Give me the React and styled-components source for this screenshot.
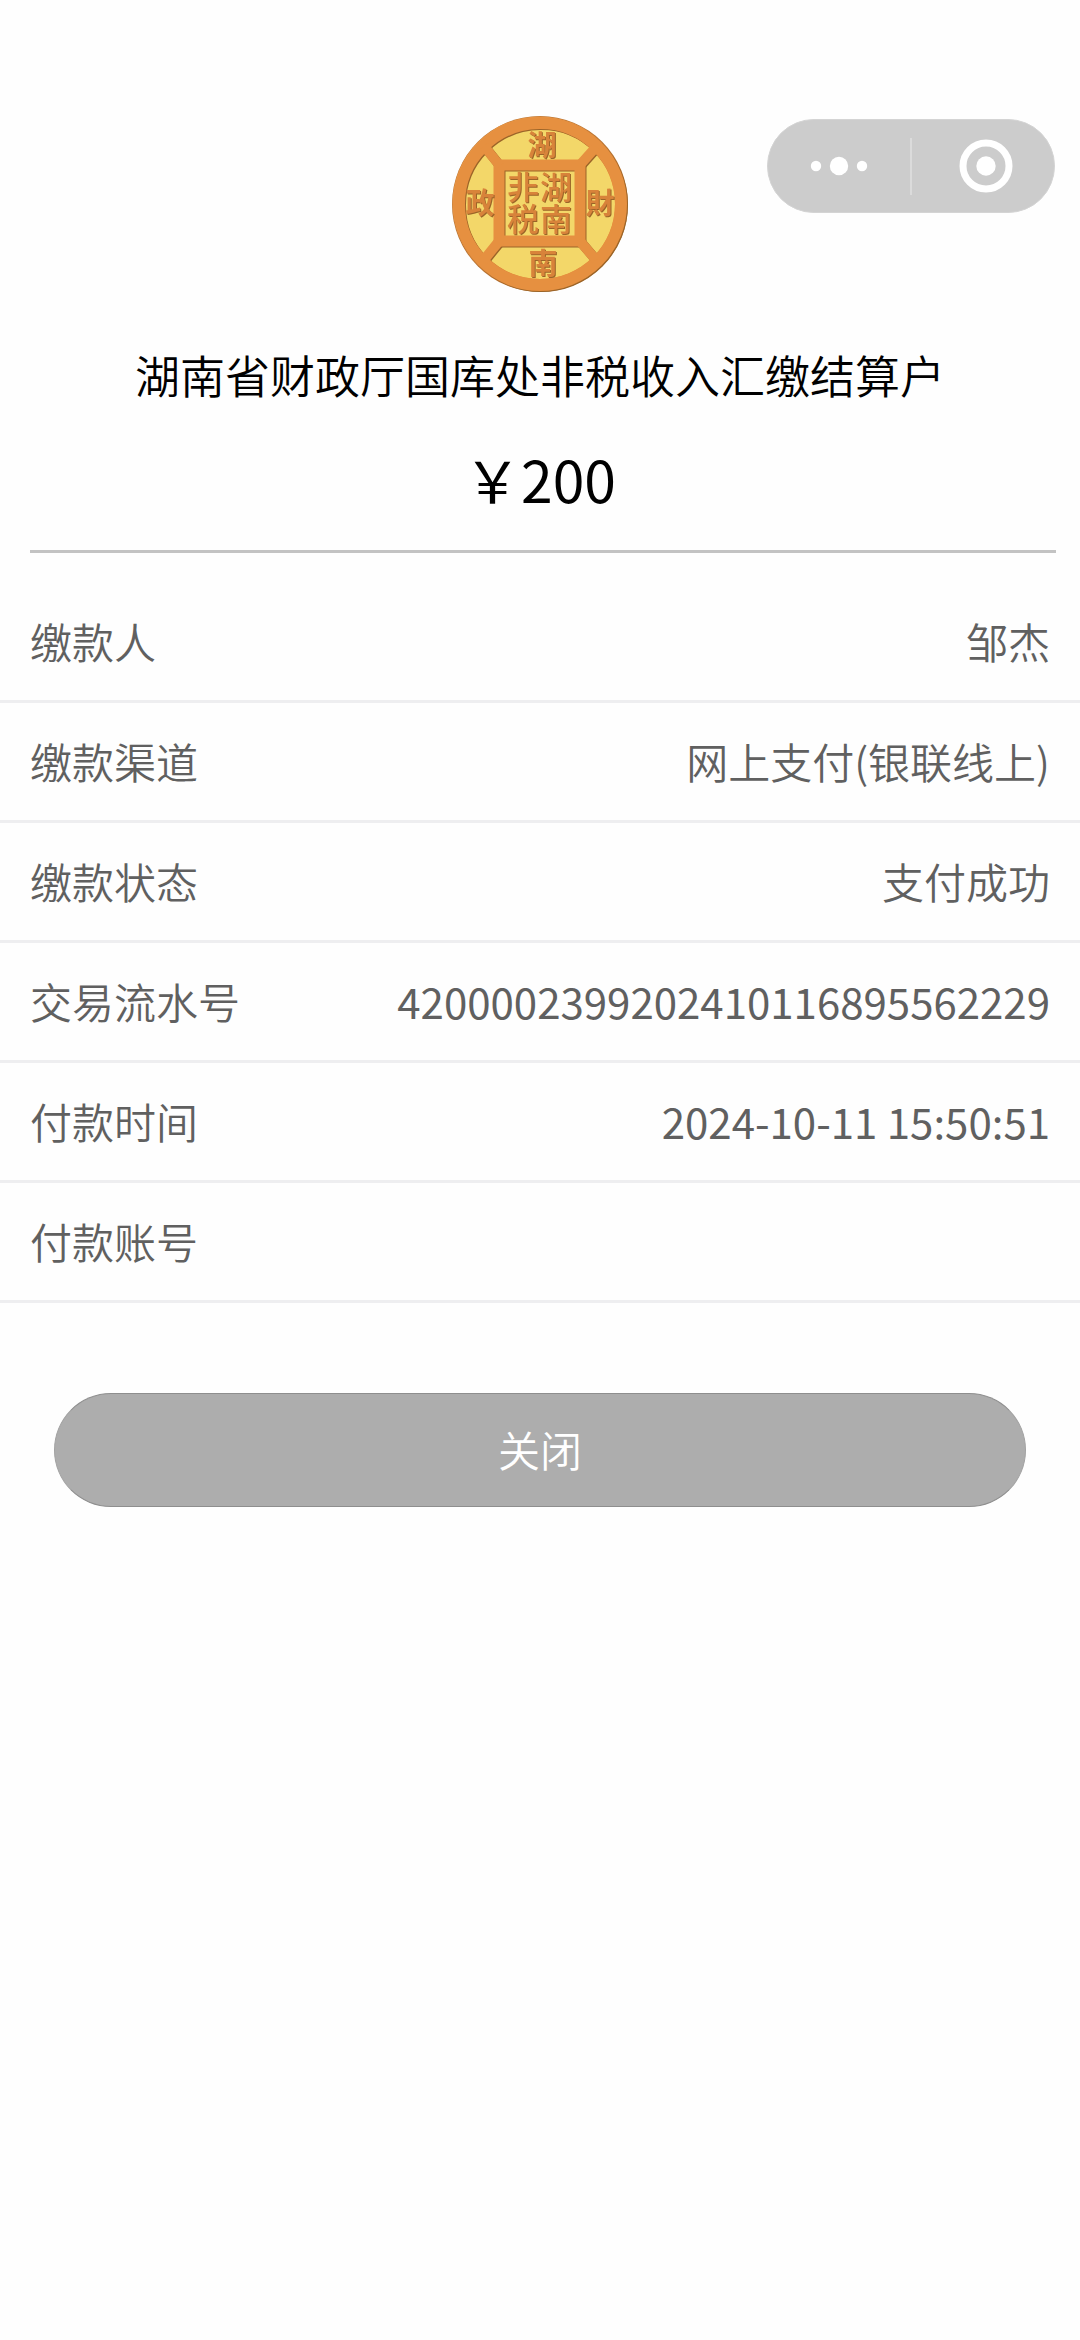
import React from "react";
import styled, { createGlobalStyle } from "styled-components";

const GlobalStyle = createGlobalStyle`
  * { box-sizing: border-box; }
  body {
    margin: 0;
    background: #fefefe;
    font-family: "Noto Sans CJK SC", sans-serif;
    font-weight: 350;
  }
`;

const Page = styled.main`
  position: relative;
  padding: 116px 0 60px;
`;

const Capsule = styled.div`
  position: absolute;
  top: 119px;
  right: 25px;
  width: 288px;
  height: 94px;
  display: flex;
  align-items: center;
  border: 1px solid #d4d4d4;
  border-radius: 47px;
  background: #cccccc;
`;

const CapsuleButton = styled.button`
  flex: 1;
  height: 100%;
  display: flex;
  align-items: center;
  justify-content: center;
  padding: 0;
  border: 0;
  background: transparent;
  cursor: pointer;
`;

const CapsuleDivider = styled.span`
  width: 2px;
  height: 57px;
  background: #dbdbdb;
`;

const Header = styled.header`
  display: flex;
  flex-direction: column;
  align-items: center;
`;

const Title = styled.h1`
  margin: 50px 0 0;
  font-size: 45px;
  line-height: 66px;
  font-weight: inherit;
  color: #000;
`;

const Amount = styled.p`
  margin: 28px 0 30px;
  font-size: 57px;
  line-height: 84px;
  font-weight: 400;
  color: #000;
`;

const Divider = styled.hr`
  height: 3px;
  margin: 0 24px 30px 30px;
  border: 0;
  background: #c3c3c3;
`;

const Details = styled.dl`
  margin: 0;
`;

const Row = styled.div`
  display: flex;
  align-items: center;
  justify-content: space-between;
  height: 120px;
  padding: 0 30px 2px;
  border-bottom: 3px solid #eeeef0;
  font-size: 42px;
  line-height: 60px;
  color: #606060;
`;

const Label = styled.dt`
  white-space: nowrap;
`;

const Value = styled.dd`
  margin: 0;
  text-align: right;
  font-weight: ${(p) => (p.$numeric ? 400 : "inherit")};
`;

const Actions = styled.div`
  display: flex;
  padding: 90px 54px 0;
`;

const CloseButton = styled.button`
  flex: 1;
  height: 114px;
  padding: 0 0 2px;
  border: 1px solid #8e8e8e;
  border-color: #8e8e8e #a2a2a2;
  border-radius: 57px;
  background: #adadad;
  color: #fff;
  font-family: inherit;
  font-weight: inherit;
  font-size: 42px;
  line-height: 60px;
  cursor: pointer;
`;

const RimText = styled.text`
  font-family: "Noto Sans CJK TC", sans-serif;
  font-size: 29px;
  font-weight: 700;
  fill: #d8833a;
  text-anchor: middle;
  dominant-baseline: central;
`;

const SealText = styled(RimText)`
  font-size: 32px;
  font-weight: 500;
  writing-mode: vertical-rl;
`;

const Engraved = styled.g`
  filter: drop-shadow(1px 1px 0 #9b6428);
`;

function Coin() {
  return (
    <svg width="176" height="176" viewBox="12 16 176 176" role="img" aria-label="湖南财政">
      <defs>
        <linearGradient id="rim" x1="0" y1="0" x2="1" y2="1">
          <stop offset="0" stopColor="#ea9a49" />
          <stop offset="1" stopColor="#e38836" />
        </linearGradient>
      </defs>
      <circle cx="100" cy="104" r="88" fill="#b87332" />
      <circle cx="99.5" cy="103.5" r="87" fill="url(#rim)" />
      <circle cx="100" cy="104" r="75" fill="#f3d769" />
      <Engraved fill="none" stroke="#e69040">
        <circle cx="100" cy="104" r="81" strokeWidth="12" />
        <rect x="59" y="65" width="81" height="76" strokeWidth="11" />
        <path d="M60 66 L44 46 M139 66 L156 47 M60 140 L43 161 M139 140 L156 160" strokeWidth="10" />
      </Engraved>
      <Engraved>
        <RimText x="102" y="43">湖</RimText>
        <RimText x="103" y="161">南</RimText>
        <RimText x="40" y="101">政</RimText>
        <RimText x="160" y="101">財</RimText>
        <SealText x="116" y="103">湖南</SealText>
        <SealText x="83" y="103">非税</SealText>
      </Engraved>
    </svg>
  );
}

const DETAILS = [
  { label: "缴款人", value: "邹杰" },
  { label: "缴款渠道", value: "网上支付(银联线上)" },
  { label: "缴款状态", value: "支付成功" },
  { label: "交易流水号", value: "4200002399202410116895562229", numeric: true },
  { label: "付款时间", value: "2024-10-11 15:50:51", numeric: true },
  { label: "付款账号", value: "", numeric: true },
];

export default function App() {
  return (
    <>
      <GlobalStyle />
      <Page>
        <Header>
          <Coin />
          <Title>湖南省财政厅国库处非税收入汇缴结算户</Title>
          <Amount>￥200</Amount>
        </Header>
        <Divider />
        <Details>
          {DETAILS.map(({ label, value, numeric }) => (
            <Row key={label}>
              <Label>{label}</Label>
              <Value $numeric={numeric}>{value}</Value>
            </Row>
          ))}
        </Details>
        <Actions>
          <CloseButton type="button">关闭</CloseButton>
        </Actions>
        <Capsule>
          <CapsuleButton type="button" aria-label="更多">
            <svg width="58" height="20" viewBox="0 0 58 20" fill="#fff">
              <circle cx="6" cy="10" r="5.2" />
              <circle cx="29" cy="10" r="9.2" />
              <circle cx="52" cy="10" r="5.2" />
            </svg>
          </CapsuleButton>
          <CapsuleDivider />
          <CapsuleButton type="button" aria-label="关闭小程序">
            <svg width="60" height="54" viewBox="0 0 60 54">
              <circle cx="33" cy="27" r="23" fill="none" stroke="#fff" strokeWidth="7" />
              <circle cx="33" cy="27" r="9.7" fill="#fff" />
            </svg>
          </CapsuleButton>
        </Capsule>
      </Page>
    </>
  );
}
